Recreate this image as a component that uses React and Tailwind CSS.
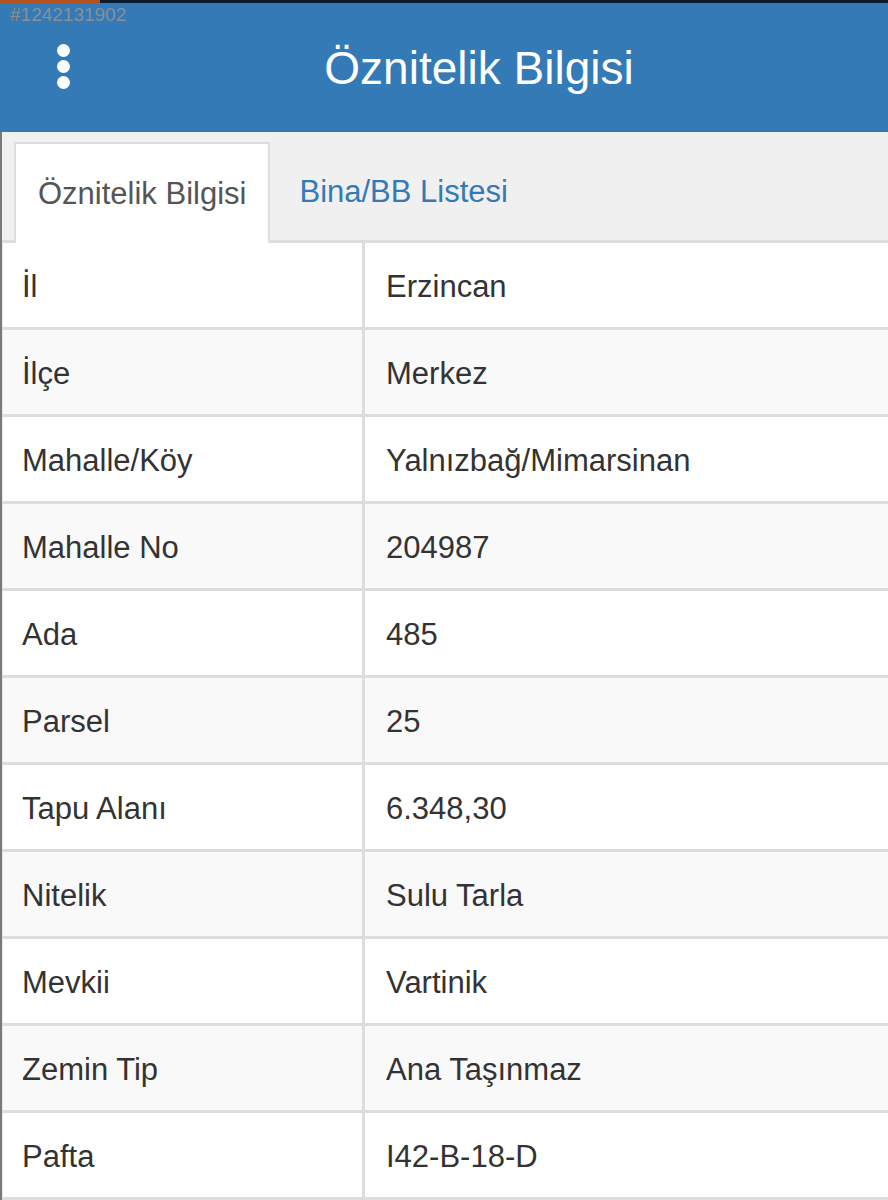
import React from "react";

const rows = [
  ["İl", "Erzincan"],
  ["İlçe", "Merkez"],
  ["Mahalle/Köy", "Yalnızbağ/Mimarsinan"],
  ["Mahalle No", "204987"],
  ["Ada", "485"],
  ["Parsel", "25"],
  ["Tapu Alanı", "6.348,30"],
  ["Nitelik", "Sulu Tarla"],
  ["Mevkii", "Vartinik"],
  ["Zemin Tip", "Ana Taşınmaz"],
  ["Pafta", "I42-B-18-D"],
];

export default function App() {
  return (
    <div
      className="w-[888px] h-[1200px] overflow-hidden bg-white flex flex-col"
      style={{ fontFamily: '"Liberation Sans", Arial, sans-serif' }}
    >
      <div className="h-[3px] flex shrink-0">
        <div className="w-[100px] bg-[#b4521f]" />
        <div className="flex-1 bg-[#0b1a30]" />
      </div>
      <div className="relative h-[129px] shrink-0 bg-[#337ab7] flex items-center">
        <div className="absolute top-[1px] left-[10px] text-[19px] leading-[22px] text-[#8a8f96]">
          #1242131902
        </div>
        <div className="w-[126px] h-full shrink-0 flex flex-col items-center justify-center gap-[3px] pb-[2px]">
          <span className="block w-[13px] h-[13px] rounded-full bg-white" />
          <span className="block w-[13px] h-[13px] rounded-full bg-white" />
          <span className="block w-[13px] h-[13px] rounded-full bg-white" />
        </div>
        <div className="flex-1 pr-[56px] text-center text-white text-[46px] leading-none">
          Öznitelik Bilgisi
        </div>
      </div>
      <div className="flex-1 flex flex-col border-l-[2px] border-[#7a7a7a]">
        <div className="h-[111px] shrink-0 bg-[#f0f0f0] border-b-[3px] border-[#dddddd] flex items-end pl-[12px]">
          <div className="h-[101px] -mb-[3px] px-[22px] pt-[2px] bg-white border-[2px] border-b-0 border-[#dddddd] flex items-center text-[31px] text-[#555555]">
            Öznitelik Bilgisi
          </div>
          <div className="h-[98px] ml-[6px] px-[23px] pt-[2px] flex items-center text-[31px] text-[#337ab7]">
            Bina/BB Listesi
          </div>
        </div>
        <div className="flex flex-col">
          {rows.map(([k, v], i) => (
            <div
              key={k}
              className={
                "h-[87px] shrink-0 flex border-b-[3px] border-[#dddddd] text-[31px] text-[#333333] " +
                (i % 2 === 1 ? "bg-[#f9f9f9]" : "bg-white")
              }
            >
              <div className="w-[363px] shrink-0 border-r-[3px] border-[#dddddd] flex items-center pl-[19px] pt-[5px] border-l-[1px] border-l-[#e6e6e6]">
                {k}
              </div>
              <div className="flex-1 flex items-center pl-[21px] pt-[5px]">{v}</div>
            </div>
          ))}
        </div>
      </div>
    </div>
  );
}
